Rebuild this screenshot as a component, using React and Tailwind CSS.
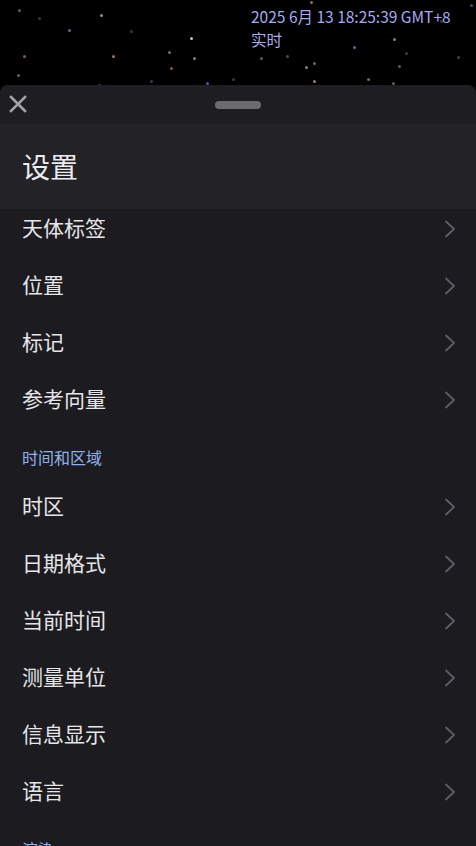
import React from 'react';

const FONT = { fontFamily: '"Noto Sans", "Noto Sans CJK SC", sans-serif' };

// deterministic star field
const stars = [
  [100, 14, '#9a8f7a'], [18, 9, '#6a5a4a'], [190, 37, '#c8c0b0'], [168, 51, '#6c6c74'],
  [23, 55, '#8a6040'], [112, 55, '#9a7858'], [68, 29, '#5a6a8a'], [130, 30, '#3a3a3a'],
  [17, 74, '#6a6060'], [51, 85, '#6a4a3a'], [98, 84, '#3a4a8a'], [206, 82, '#4a5aaa'],
  [193, 57, '#8a8070'], [170, 67, '#7a6040'], [305, 66, '#8a8478'], [313, 62, '#706860'],
  [353, 46, '#5a6ab0'], [393, 38, '#9a7a5a'], [405, 52, '#4a3a3a'], [398, 65, '#6a5a4a'],
  [367, 78, '#7a6a5a'], [392, 82, '#6a5a4a'], [457, 56, '#4a4040'], [470, 4, '#3a4a7a'],
  [310, 1, '#8a7050'], [286, 55, '#4a4a60'], [313, 80, '#a08060'], [260, 57, '#5a5a5a'],
  [38, 17, '#3a3a3a'], [150, 80, '#3a3a4a'], [440, 20, '#3a3a3a'], [232, 78, '#3a3a3a'],
];

const group1 = ['天体标签', '位置', '标记', '参考向量'];
const group2 = ['时区', '日期格式', '当前时间', '测量单位', '信息显示', '语言'];

function Chevron() {
  return (
    <svg width="12" height="18" viewBox="0 0 12 18" fill="none" className="shrink-0">
      <polyline points="2,1.5 10,9 2,16.5" stroke="#5e5e65" strokeWidth="1.8" strokeLinecap="round" strokeLinejoin="round" />
    </svg>
  );
}

function Row({ label }) {
  return (
    <div className="h-[57px] flex items-center justify-between pl-[22px] pr-[20px]">
      <span className="text-[21px] text-[#e6e6e8] leading-none">{label}</span>
      <Chevron />
    </div>
  );
}

function SectionHeader({ label }) {
  return (
    <div className="h-[50px] pt-[20px] pl-[22px]">
      <div className="text-[16px] leading-[20px] text-[#8fb0ee]">{label}</div>
    </div>
  );
}

export default function App() {
  return (
    <div className="w-[476px] h-[846px] bg-black overflow-hidden flex flex-col" style={FONT}>
      <div className="relative h-[85px] shrink-0">
        {stars.map(([x, y, c], i) => (
          <span key={i} className="absolute w-[3px] h-[3px] rounded-full" style={{ left: x, top: y, backgroundColor: c }} />
        ))}
        <div className="absolute left-[251px] top-[5px] text-[15.5px] leading-[23px] text-[#a9a9f2]" style={{ fontFamily: '"Noto Sans CJK SC", sans-serif' }}>
          <div className="whitespace-nowrap">2025 6月 13 18:25:39 GMT+8</div>
          <div>实时</div>
        </div>
      </div>

      <div className="flex-1 flex flex-col rounded-t-[8px] overflow-hidden bg-[#1c1b20]">
        <div className="relative h-[39px] shrink-0 bg-[#1e1e22] flex items-center justify-center">
          <svg className="absolute left-[9px] top-[10px]" width="18" height="18" viewBox="0 0 18 18">
            <path d="M2 2 L16 16 M16 2 L2 16" stroke="#a3a3a6" strokeWidth="2.6" strokeLinecap="square" />
          </svg>
          <div className="w-[46px] h-[8px] rounded-full bg-[#6b6b6d]" />
        </div>
        <div className="h-[85px] shrink-0 bg-[#222227] flex items-center pl-[22px]">
          <span className="text-[28px] text-[#ececee] leading-none">设置</span>
        </div>
        <div className="flex-1 overflow-hidden">
          <div className="mt-[-9px]">
            {group1.map((l) => <Row key={l} label={l} />)}
            <SectionHeader label="时间和区域" />
            {group2.map((l) => <Row key={l} label={l} />)}
            <SectionHeader label="渲染" />
            <Row label="大气" />
          </div>
        </div>
      </div>
    </div>
  );
}
